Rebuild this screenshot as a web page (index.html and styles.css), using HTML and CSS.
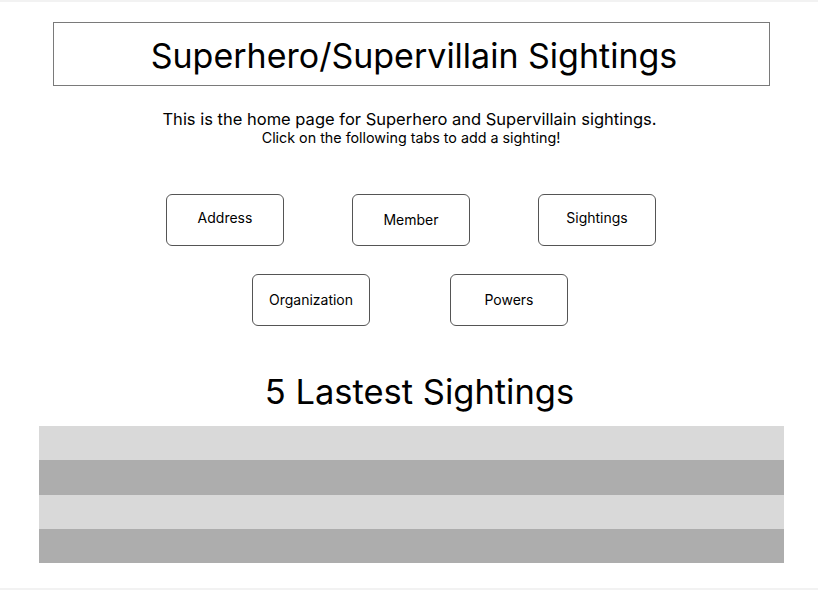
FILE: index.html
```html
<!DOCTYPE html>
<html>
<head>
<meta charset="utf-8">
<link rel="stylesheet" href="styles.css">
</head>
<body>
<div class="page">
  <header class="title-box">
    <h1 class="title">Superhero/Supervillain Sightings</h1>
  </header>
  <section class="intro">
    <p class="lead">This is the home page for Superhero and Supervillain sightings.</p>
    <p class="sub">Click on the following tabs to add a sighting!</p>
  </section>
  <nav class="tabs">
    <div class="tab-row row-one">
      <a class="tab tab-up">Address</a>
      <a class="tab">Member</a>
      <a class="tab tab-up">Sightings</a>
    </div>
    <div class="tab-row row-two">
      <a class="tab">Organization</a>
      <a class="tab">Powers</a>
    </div>
  </nav>
  <h2 class="latest">5 Lastest Sightings</h2>
  <div class="table">
    <div class="row light"></div>
    <div class="row dark"></div>
    <div class="row light"></div>
    <div class="row dark"></div>
  </div>
</div>
</body>
</html>
```
FILE: styles.css
```css
html, body {
  margin: 0;
  padding: 0;
  background: #ffffff;
}
body {
  font-family: "Inter", "Liberation Sans", sans-serif;
  color: #000;
}
.page {
  width: 818px;
  height: 590px;
  box-sizing: border-box;
  border-top: 2px solid #f2f2f2;
  border-bottom: 2px solid #f2f2f2;
  padding-top: 20px;
}
.title-box {
  margin-left: 53px;
  width: 717px;
  height: 64px;
  box-sizing: border-box;
  border: 1px solid #7a7a7a;
  display: flex;
  align-items: center;
  justify-content: center;
}
.title {
  margin: 0;
  font-size: 34px;
  font-weight: 400;
  line-height: 40px;
  padding-left: 5px;
  padding-top: 3px;
}
.intro {
  margin-top: 23px;
  text-align: center;
  padding-left: 1px;
}
.lead {
  margin: 0;
  font-size: 16.5px;
  line-height: 20px;
}
.sub {
  margin: 0;
  font-size: 14.3px;
  line-height: 17px;
  padding-left: 3px;
}
.tabs {
  margin-top: 48px;
  display: flex;
  flex-direction: column;
  gap: 28px;
}
.tab-row {
  display: flex;
}
.row-one {
  padding-left: 166px;
  gap: 68px;
}
.row-two {
  padding-left: 252px;
  gap: 80px;
}
.tab {
  width: 118px;
  height: 52px;
  box-sizing: border-box;
  border: 1px solid #555;
  border-radius: 6px;
  display: flex;
  align-items: center;
  justify-content: center;
  font-size: 14px;
  line-height: 17px;
  padding-bottom: 1px;
}
.tab-up {
  padding-bottom: 6px;
}
.latest {
  margin: 45px 0 0;
  text-align: center;
  font-size: 34.5px;
  font-weight: 400;
  line-height: 42px;
  padding-left: 21px;
}
.table {
  margin: 13px 0 0 39px;
  width: 745px;
  display: flex;
  flex-direction: column;
}
.row {
  height: 34.25px;
}
.light {
  background: #d9d9d9;
}
.dark {
  background: #adadad;
}
```
